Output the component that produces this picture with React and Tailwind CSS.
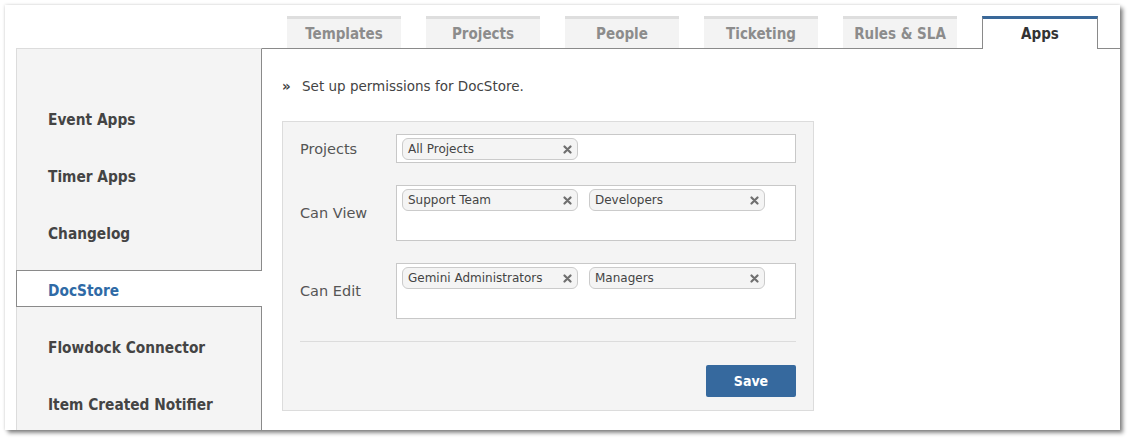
import React from 'react'

const tabs = ['Templates', 'Projects', 'People', 'Ticketing', 'Rules & SLA']
const navItems = ['Event Apps', 'Timer Apps', 'Changelog', 'DocStore', 'Flowdock Connector', 'Item Created Notifier']

const font = { fontFamily: '"DejaVu Sans Condensed", "DejaVu Sans", Verdana, sans-serif' }
const plain = { fontFamily: '"DejaVu Sans", Verdana, sans-serif' }

const CloseIcon = () => (
  <svg width="9" height="9" viewBox="0 0 9 9" className="shrink-0">
    <path d="M1.5 1.5 L7.5 7.5 M7.5 1.5 L1.5 7.5" stroke="#6f6f6f" strokeWidth="2.2" strokeLinecap="round" />
  </svg>
)

const Tag = ({ label }) => (
  <div className="flex items-center justify-between w-[176px] h-[22px] pl-[5px] pr-[5px] rounded-[6px] border border-[#cbcbcb] bg-[#f4f4f4]">
    <span className="text-[12px] text-[#444]" style={plain}>{label}</span>
    <CloseIcon />
  </div>
)

const Field = ({ label, tags, tall }) => (
  <div className="flex items-center">
    <div className="w-[96px] pt-[2px] text-[14.5px] text-[#555]" style={plain}>{label}</div>
    <div className={`w-[400px] ${tall ? 'h-[56px]' : 'h-[29px]'} border border-[#c8c8c8] bg-white pt-[3px] pl-[5px] flex items-start gap-[11px]`}>
      {tags.map((t) => <Tag key={t} label={t} />)}
    </div>
  </div>
)

export default function App() {
  return (
    <div className="w-[1129px] h-[439px] bg-white pt-[5px] pl-[5px]" style={font}>
      <div className="w-[1115px] h-[425px] bg-white overflow-hidden flex flex-col shadow-[0_0_3px_rgba(0,0,0,0.18),3px_3px_4px_rgba(0,0,0,0.45)]">
        {/* Tabs */}
        <div className="h-[43px] shrink-0 flex items-end pl-[282px] gap-[25px]">
          {tabs.map((t) => (
            <div key={t} className="w-[114px] h-[32px] pt-[2px] border-t-[3px] border-[#dedede] bg-[#f3f3f3] flex items-center justify-center text-[15px] font-bold text-[#8c8c8c]">
              {t}
            </div>
          ))}
          <div className="relative z-10 -mb-px w-[116px] h-[33px] pt-[1px] bg-white border-t-[3px] border-t-[#3a6899] border-x border-x-[#8a8a8a] flex items-center justify-center text-[15px] font-bold text-[#333]">
            Apps
          </div>
        </div>

        {/* Body */}
        <div className="flex flex-1 pl-[11px]">
          {/* Left nav */}
          <div className="w-[246px] shrink-0 bg-[#f4f4f4] border-l border-l-[#dcdcdc] border-t border-t-[#dcdcdc] border-r border-r-[#8a8a8a] pt-[50px] flex flex-col gap-[20px]">
            {navItems.map((n) =>
              n === 'DocStore' ? (
                <div key={n} className="relative z-10 -ml-px -mr-px h-[37px] bg-white border border-[#8a8a8a] border-r-0 flex items-center pl-[31px] pt-[5px] text-[15.3px] font-bold text-[#2f6aa6]">
                  {n}
                </div>
              ) : (
                <div key={n} className="h-[37px] flex items-center pl-[31px] pt-[5px] text-[15.3px] font-bold text-[#444]">
                  {n}
                </div>
              )
            )}
          </div>

          {/* Content */}
          <div className="flex-1 border-t border-t-[#8a8a8a] pl-[20px] pt-[28px]">
            <div className="flex items-center h-[18px] text-[13.5px] text-[#444]" style={plain}>
              <span className="font-bold w-[20px]">»</span>
              <span>Set up permissions for DocStore.</span>
            </div>

            <div className="mt-[26px] w-[532px] h-[290px] border border-[#dcdcdc] bg-[#f4f4f4] pt-[12px] pl-[17px] pr-[17px] flex flex-col">
              <div className="flex flex-col gap-[22px]">
                <Field label="Projects" tags={['All Projects']} />
                <Field label="Can View" tags={['Support Team', 'Developers']} tall />
                <Field label="Can Edit" tags={['Gemini Administrators', 'Managers']} tall />
              </div>
              <div className="mt-[22px] border-t border-[#dcdcdc]" />
              <div className="mt-[23px] flex justify-end">
                <button className="w-[90px] h-[32px] rounded-[2px] bg-[#36699e] text-white text-[14px] font-bold">
                  Save
                </button>
              </div>
            </div>
          </div>
        </div>
      </div>
    </div>
  )
}
